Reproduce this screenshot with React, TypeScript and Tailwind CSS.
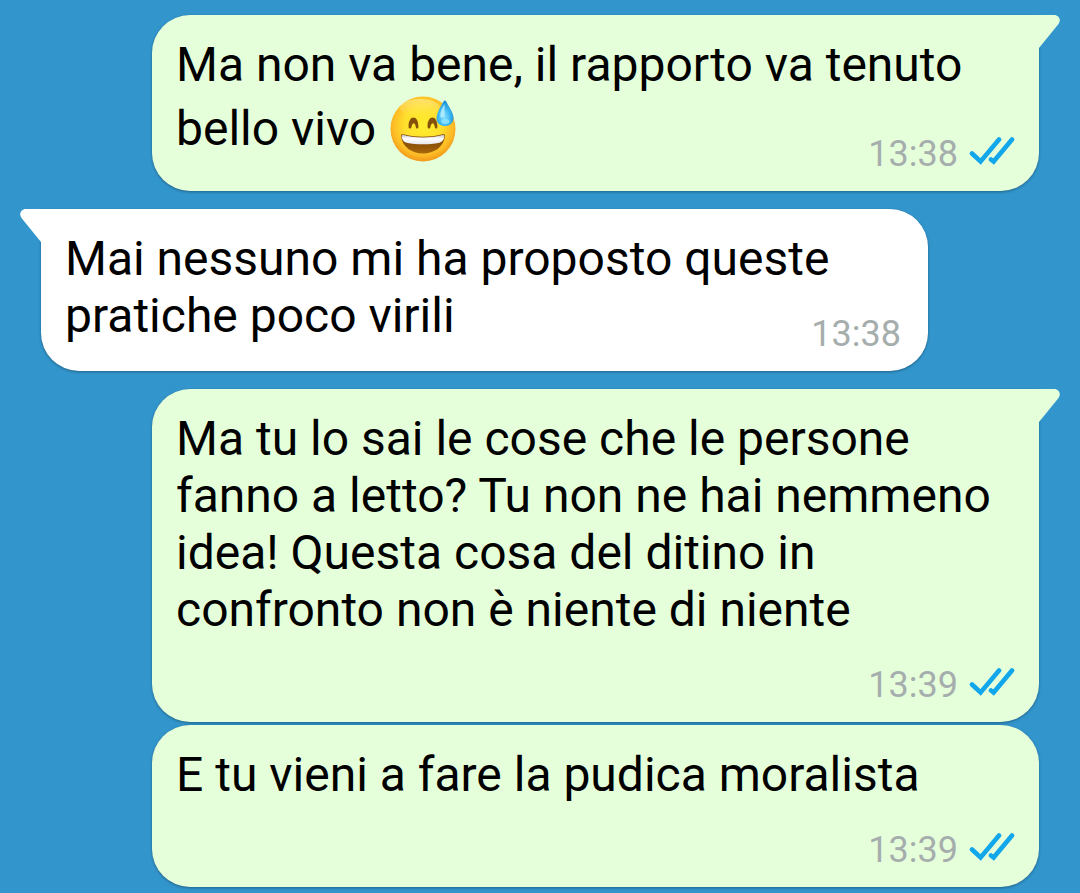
import type { ReactNode } from "react";

type Message = {
  id: number;
  body: ReactNode;
  time: string;
  sent: boolean;
  tail: boolean;
  inlineTime: boolean;
};

function SweatSmile() {
  return (
    <svg
      role="img"
      aria-label="😅"
      viewBox="0 0 66 66"
      className="mt-[3px] mb-[2px] ml-[2px] inline-block h-[66px] w-[66px] align-[-19px]"
    >
      <defs>
        <radialGradient id="face" cx="0.5" cy="0.44" r="0.58">
          <stop offset="0" stopColor="#ffee2e" />
          <stop offset="0.5" stopColor="#ffdf2c" />
          <stop offset="0.8" stopColor="#fdbb26" />
          <stop offset="1" stopColor="#ee9118" />
        </radialGradient>
        <linearGradient id="shine" x1="0" y1="0" x2="0" y2="1">
          <stop offset="0" stopColor="#fff2a0" stopOpacity="0.6" />
          <stop offset="1" stopColor="#fff06a" stopOpacity="0" />
        </linearGradient>
        <linearGradient id="mouth" x1="0" y1="0" x2="0" y2="1">
          <stop offset="0" stopColor="#7a4308" />
          <stop offset="0.7" stopColor="#96570a" />
          <stop offset="1" stopColor="#a9690c" />
        </linearGradient>
        <linearGradient id="teeth" x1="0" y1="0" x2="0" y2="1">
          <stop offset="0" stopColor="#c9c4c6" />
          <stop offset="0.4" stopColor="#ffffff" />
          <stop offset="1" stopColor="#e6e4ec" />
        </linearGradient>
        <radialGradient id="drop" cx="0.45" cy="0.65" r="0.65">
          <stop offset="0" stopColor="#8be2ff" />
          <stop offset="0.5" stopColor="#40baf4" />
          <stop offset="1" stopColor="#168bd2" />
        </radialGradient>
      </defs>
      <circle cx="33" cy="33" r="32.5" fill="url(#face)" />
      <ellipse cx="30" cy="12" rx="20" ry="9" fill="url(#shine)" />
      <path d="M18.6 31C18 19 28.6 18 28.4 31C28.3 33 26.2 33 25.8 31C25 26 22.5 26 21.4 31C21 33 18.8 33 18.6 31Z" fill="#85500c" />
      <path d="M37.6 31C37 19 47.6 18 47.4 31C47.3 33 45.2 33 44.8 31C44 26 41.5 26 40.4 31C40 33 37.8 33 37.6 31Z" fill="#85500c" />
      <path d="M11 40C11 37.6 12.6 38 14.5 38.6C26 41.5 40 41.5 51.5 38.6C53.5 38 55 38 55 40C53.5 51 44.5 57.5 33 57.5C21.5 57.5 12.5 51 11 40Z" fill="url(#mouth)" />
      <path d="M11.6 40.2C11.6 38.6 13 38.8 14.6 39.3C26.5 42.2 39.5 42.2 51.4 39.3C53.2 38.8 54.4 39 54.3 40.5C54 43.5 52.4 46 49.5 46.7C39 48.8 27 48.8 16.5 46.7C13.6 46 11.9 43.5 11.6 40.2Z" fill="url(#teeth)" />
      <path d="M53.5 5.5C54.5 4 55.8 4.5 56.5 6C59.5 12 63.8 17 63.5 22.5C63 32.5 47 32.5 46.6 23C46.4 17 50.5 11 53.5 5.5Z" fill="url(#drop)" />
      <path d="M54.5 8C52 12 50 16 50.3 20C50.8 23 54 21.5 54.8 18Z" fill="#c5f2ff" opacity="0.75" />
      <ellipse cx="55.5" cy="25.5" rx="4.2" ry="2.5" fill="#9be9ff" opacity="0.65" />
    </svg>
  );
}

function ReadTicks() {
  return (
    <svg
      role="img"
      aria-label="Letto"
      viewBox="0 0 46 36"
      className="h-[36px] w-[46px]"
      fill="none"
      stroke="#12a6ea"
      strokeWidth="4.6"
      strokeLinecap="round"
      strokeLinejoin="miter"
    >
      <path d="M3 17.5L11.6 25.5L30 3.5" />
      <path d="M22 23.5L24.6 25.5L43 3.5" />
    </svg>
  );
}

function Tail({ sent }: { sent: boolean }) {
  return (
    <svg
      aria-hidden="true"
      viewBox="0 0 22 34"
      className={
        sent
          ? "absolute top-0 left-full -ml-px h-[34px] w-[22px] fill-[#e5ffdb]"
          : "absolute top-0 right-full -mr-px h-[34px] w-[22px] -scale-x-100 fill-white"
      }
    >
      <path d="M0 0H16C21 0 23.5 5 20.5 9L1 33V34H0Z" />
    </svg>
  );
}

function Bubble({ message }: { message: Message }) {
  const { body, time, sent, tail, inlineTime } = message;
  const side = sent ? "self-end bg-[#e5ffdb] pr-[24px]" : "self-start bg-white pr-[27px]";
  const corner = !tail ? "" : sent ? "rounded-tr-none" : "rounded-tl-none";
  return (
    <li
      className={`relative w-full max-w-[887px] rounded-[38px] pt-[21px] pb-[16px] pl-[24px] shadow-[0_1px_3px_rgba(0,0,0,0.35)] ${side} ${corner}`}
    >
      {tail && <Tail sent={sent} />}
      <p className="text-[48px] leading-[57px] text-black">{body}</p>
      <div
        className={`flex items-center justify-end gap-[11px] text-[36px] leading-[42px] text-[#a6adad] ${
          inlineTime ? "-mt-[31px]" : "mt-[26px]"
        }`}
      >
        <time dateTime={time}>{time}</time>
        {sent && <ReadTicks />}
      </div>
    </li>
  );
}

const groups: Message[][] = [
  [
    {
      id: 1,
      body: (
        <>
          Ma non va bene, il rapporto va tenuto bello vivo <SweatSmile />
        </>
      ),
      time: "13:38",
      sent: true,
      tail: true,
      inlineTime: true,
    },
  ],
  [
    {
      id: 2,
      body: "Mai nessuno mi ha proposto queste pratiche poco virili",
      time: "13:38",
      sent: false,
      tail: true,
      inlineTime: true,
    },
  ],
  [
    {
      id: 3,
      body: "Ma tu lo sai le cose che le persone fanno a letto? Tu non ne hai nemmeno idea! Questa cosa del ditino in confronto non è niente di niente",
      time: "13:39",
      sent: true,
      tail: true,
      inlineTime: false,
    },
    {
      id: 4,
      body: "E tu vieni a fare la pudica moralista",
      time: "13:39",
      sent: true,
      tail: false,
      inlineTime: false,
    },
  ],
];

export default function App() {
  return (
    <main className="flex min-h-screen flex-col gap-[18px] bg-[#3296cd] px-[41px] pt-[15px] font-['Roboto',sans-serif]">
      {groups.map((group) => (
        <ul key={group[0].id} className="flex flex-col gap-[3px]">
          {group.map((message) => (
            <Bubble key={message.id} message={message} />
          ))}
        </ul>
      ))}
    </main>
  );
}
